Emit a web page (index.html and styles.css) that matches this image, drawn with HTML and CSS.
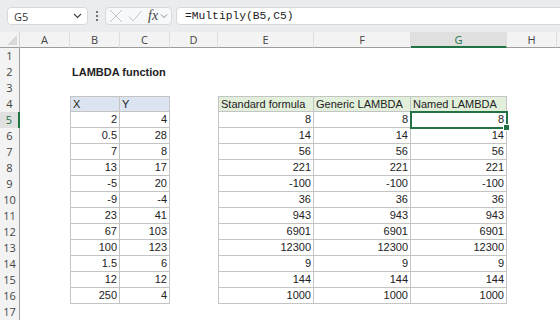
FILE: index.html
```html
<!DOCTYPE html>
<html lang="en">
<head>
<meta charset="UTF-8" />
<meta name="viewport" content="width=device-width, initial-scale=1.0" />
<title>LAMBDA function</title>
<link rel="stylesheet" href="styles.css">
</head>
<body>
<!-- formula bar -->
<div class="toolbar">
  <div class="namebox">
    <span>G5</span>
    <svg class="chev" width="9" height="6" viewBox="0 0 9 6"><path d="M1 1l3.5 3.5L8 1" fill="none" stroke="#444" stroke-width="1.2"/></svg>
  </div>
  <div class="dots">
    <svg width="4" height="12" viewBox="0 0 4 12"><circle cx="2" cy="2" r="1.1" fill="#555"/><circle cx="2" cy="6" r="1.1" fill="#555"/><circle cx="2" cy="10" r="1.1" fill="#555"/></svg>
  </div>
  <div class="fxbox">
    <svg width="14" height="14" viewBox="0 0 14 14"><path d="M1 1l12 12M13 1L1 13" stroke="#c4c4c4" stroke-width="1"/></svg>
    <svg width="14" height="14" viewBox="0 0 14 14"><path d="M1 7.5l4 4.5L13.5 2" fill="none" stroke="#c4c4c4" stroke-width="1"/></svg>
    <span class="fx">fx</span>
    <svg class="chev" width="8" height="6" viewBox="0 0 8 6"><path d="M1 1.5l3 3 3-3" fill="none" stroke="#888" stroke-width="1"/></svg>
  </div>
  <div class="formula">=Multiply(B5,C5)</div>
</div>

<!-- worksheet -->
<div class="sheet">
  <div class="corner"></div>
  <div class="ch">A</div><div class="ch">B</div><div class="ch">C</div><div class="ch">D</div>
  <div class="ch">E</div><div class="ch">F</div><div class="ch sel">G</div><div class="ch">H</div><div class="ch last"></div>

  <div class="rh">1</div><div></div><div></div><div></div><div></div><div></div><div></div><div></div><div></div><div></div>
  <div class="rh">2</div><div></div><div class="title">LAMBDA function</div><div></div><div></div><div></div><div></div><div></div><div></div><div></div>
  <div class="rh">3</div><div></div><div></div><div></div><div></div><div></div><div></div><div></div><div></div><div></div>

  <div class="rh">4</div><div></div>
  <div class="t1 hd first top">X</div><div class="t1 hd top">Y</div><div></div>
  <div class="t2 hd first top">Standard formula</div><div class="t2 hd top">Generic LAMBDA</div><div class="t2 hd top">Named LAMBDA</div>
  <div></div><div></div>

  <div class="rh sel">5</div><div></div>
  <div class="t1 n first">2</div><div class="t1 n">4</div><div></div>
  <div class="t2 n first">8</div><div class="t2 n">8</div><div class="t2 n active">8</div><div></div><div></div>

  <div class="rh">6</div><div></div>
  <div class="t1 n first">0.5</div><div class="t1 n">28</div><div></div>
  <div class="t2 n first">14</div><div class="t2 n">14</div><div class="t2 n">14</div><div></div><div></div>

  <div class="rh">7</div><div></div>
  <div class="t1 n first">7</div><div class="t1 n">8</div><div></div>
  <div class="t2 n first">56</div><div class="t2 n">56</div><div class="t2 n">56</div><div></div><div></div>

  <div class="rh">8</div><div></div>
  <div class="t1 n first">13</div><div class="t1 n">17</div><div></div>
  <div class="t2 n first">221</div><div class="t2 n">221</div><div class="t2 n">221</div><div></div><div></div>

  <div class="rh">9</div><div></div>
  <div class="t1 n first">-5</div><div class="t1 n">20</div><div></div>
  <div class="t2 n first">-100</div><div class="t2 n">-100</div><div class="t2 n">-100</div><div></div><div></div>

  <div class="rh">10</div><div></div>
  <div class="t1 n first">-9</div><div class="t1 n">-4</div><div></div>
  <div class="t2 n first">36</div><div class="t2 n">36</div><div class="t2 n">36</div><div></div><div></div>

  <div class="rh">11</div><div></div>
  <div class="t1 n first">23</div><div class="t1 n">41</div><div></div>
  <div class="t2 n first">943</div><div class="t2 n">943</div><div class="t2 n">943</div><div></div><div></div>

  <div class="rh">12</div><div></div>
  <div class="t1 n first">67</div><div class="t1 n">103</div><div></div>
  <div class="t2 n first">6901</div><div class="t2 n">6901</div><div class="t2 n">6901</div><div></div><div></div>

  <div class="rh">13</div><div></div>
  <div class="t1 n first">100</div><div class="t1 n">123</div><div></div>
  <div class="t2 n first">12300</div><div class="t2 n">12300</div><div class="t2 n">12300</div><div></div><div></div>

  <div class="rh">14</div><div></div>
  <div class="t1 n first">1.5</div><div class="t1 n">6</div><div></div>
  <div class="t2 n first">9</div><div class="t2 n">9</div><div class="t2 n">9</div><div></div><div></div>

  <div class="rh">15</div><div></div>
  <div class="t1 n first">12</div><div class="t1 n">12</div><div></div>
  <div class="t2 n first">144</div><div class="t2 n">144</div><div class="t2 n">144</div><div></div><div></div>

  <div class="rh">16</div><div></div>
  <div class="t1 n first">250</div><div class="t1 n">4</div><div></div>
  <div class="t2 n first">1000</div><div class="t2 n">1000</div><div class="t2 n">1000</div><div></div><div></div>

  <div class="rh">17</div><div></div><div></div><div></div><div></div><div></div><div></div><div></div><div></div><div></div>
</div>
</body>
</html>
```

FILE: styles.css
```css
/* === base === */
body {
  margin: 0;
  background: #fff;
  font-family: "Liberation Sans", Arial, sans-serif;
  color: #222;
  overflow: hidden;
}
/* === formula bar === */
.toolbar {
  height: 32px;
  background: #e9edf0;
  display: flex;
  align-items: center;
  padding-left: 7px;
  box-sizing: border-box;
}
.namebox {
  width: 81px;
  height: 18px;
  box-sizing: border-box;
  background: #fff;
  border: 1px solid #d6d9dc;
  border-radius: 4px;
  display: flex;
  align-items: center;
  justify-content: space-between;
  padding: 0 5px 0 6px;
  font-family: "Open Sans", sans-serif;
  font-size: 11px;
  color: #333;
}
.dots {
  width: 17px;
  display: flex;
  justify-content: center;
}
.fxbox {
  width: 67px;
  height: 18px;
  box-sizing: border-box;
  border: 1px solid #d6d9dc;
  border-radius: 4px;
  background: #f7f8f9;
  display: flex;
  align-items: center;
  gap: 5px;
  padding-left: 3px;
}
.fx {
  font-family: "Liberation Serif", serif;
  font-style: italic;
  font-size: 14px;
  color: #444;
  margin-left: 1px;
}
.fxbox .chev {
  margin-left: -3px;
}
.formula {
  flex: 1;
  height: 18px;
  margin-left: 4px;
  margin-right: -8px;
  box-sizing: border-box;
  background: #fff;
  border: 1px solid #d6d9dc;
  border-radius: 4px;
  padding-left: 8px;
  font-family: "Liberation Mono", monospace;
  font-size: 11.3px;
  line-height: 16px;
  color: #222;
}
/* === worksheet grid === */
.sheet {
  display: grid;
  grid-template-columns: 20px 50px 50px 50px 48px 96px 97px 96px 50px 1fr;
  grid-auto-rows: 16px;
  font-size: 11px;
  line-height: 16px;
}
.sheet > div {
  box-sizing: border-box;
  white-space: nowrap;
  min-width: 0;
}
.corner {
  background: #f3f3f3;
  border-right: 1px solid #d4d4d4;
  border-bottom: 1px solid #9c9c9c;
  position: relative;
}
.corner::after {
  content: "";
  position: absolute;
  right: 2px;
  bottom: 2px;
  border-style: solid;
  border-width: 0 0 10px 10px;
  border-color: transparent transparent #d8d8d8 transparent;
}
.ch {
  background: #f3f3f3;
  border-right: 1px solid #dedede;
  border-bottom: 1px solid #9c9c9c;
  text-align: center;
  font-family: "Open Sans", sans-serif;
  font-size: 11px;
  color: #444;
}
.ch.sel {
  background: #e0e0e0;
  border-bottom: 2px solid #217346;
  color: #217346;
}
.ch.last {
  border-right: none;
}
.rh {
  background: #f3f3f3;
  border-right: 1px solid #9c9c9c;
  text-align: center;
  font-family: "Open Sans", sans-serif;
  font-size: 11px;
  color: #444;
}
.rh.sel {
  background: #e0e0e0;
  border-right: 2px solid #217346;
  color: #217346;
}
.title {
  font-weight: bold;
  overflow: visible;
  padding-left: 2px;
}
/* === data tables === */
.t1,
.t2 {
  border-right: 1px solid #c4c4c4;
  border-bottom: 1px solid #c4c4c4;
  padding: 0 2px;
}
.first {
  border-left: 1px solid #c4c4c4;
}
.top {
  border-top: 1px solid #c4c4c4;
  line-height: 14px;
}
.t1.hd {
  background: #dce4f1;
}
.t2.hd {
  background: #e2efda;
}
.n {
  text-align: right;
  line-height: 15px;
}
/* active cell */
.active {
  position: relative;
}
.active::before {
  content: "";
  position: absolute;
  left: -1px;
  top: -1px;
  right: -2px;
  bottom: -2px;
  border: 2px solid #217346;
}
.active::after {
  content: "";
  position: absolute;
  right: -4px;
  bottom: -4px;
  width: 5px;
  height: 5px;
  background: #217346;
  border: 1px solid #fff;
}
```
